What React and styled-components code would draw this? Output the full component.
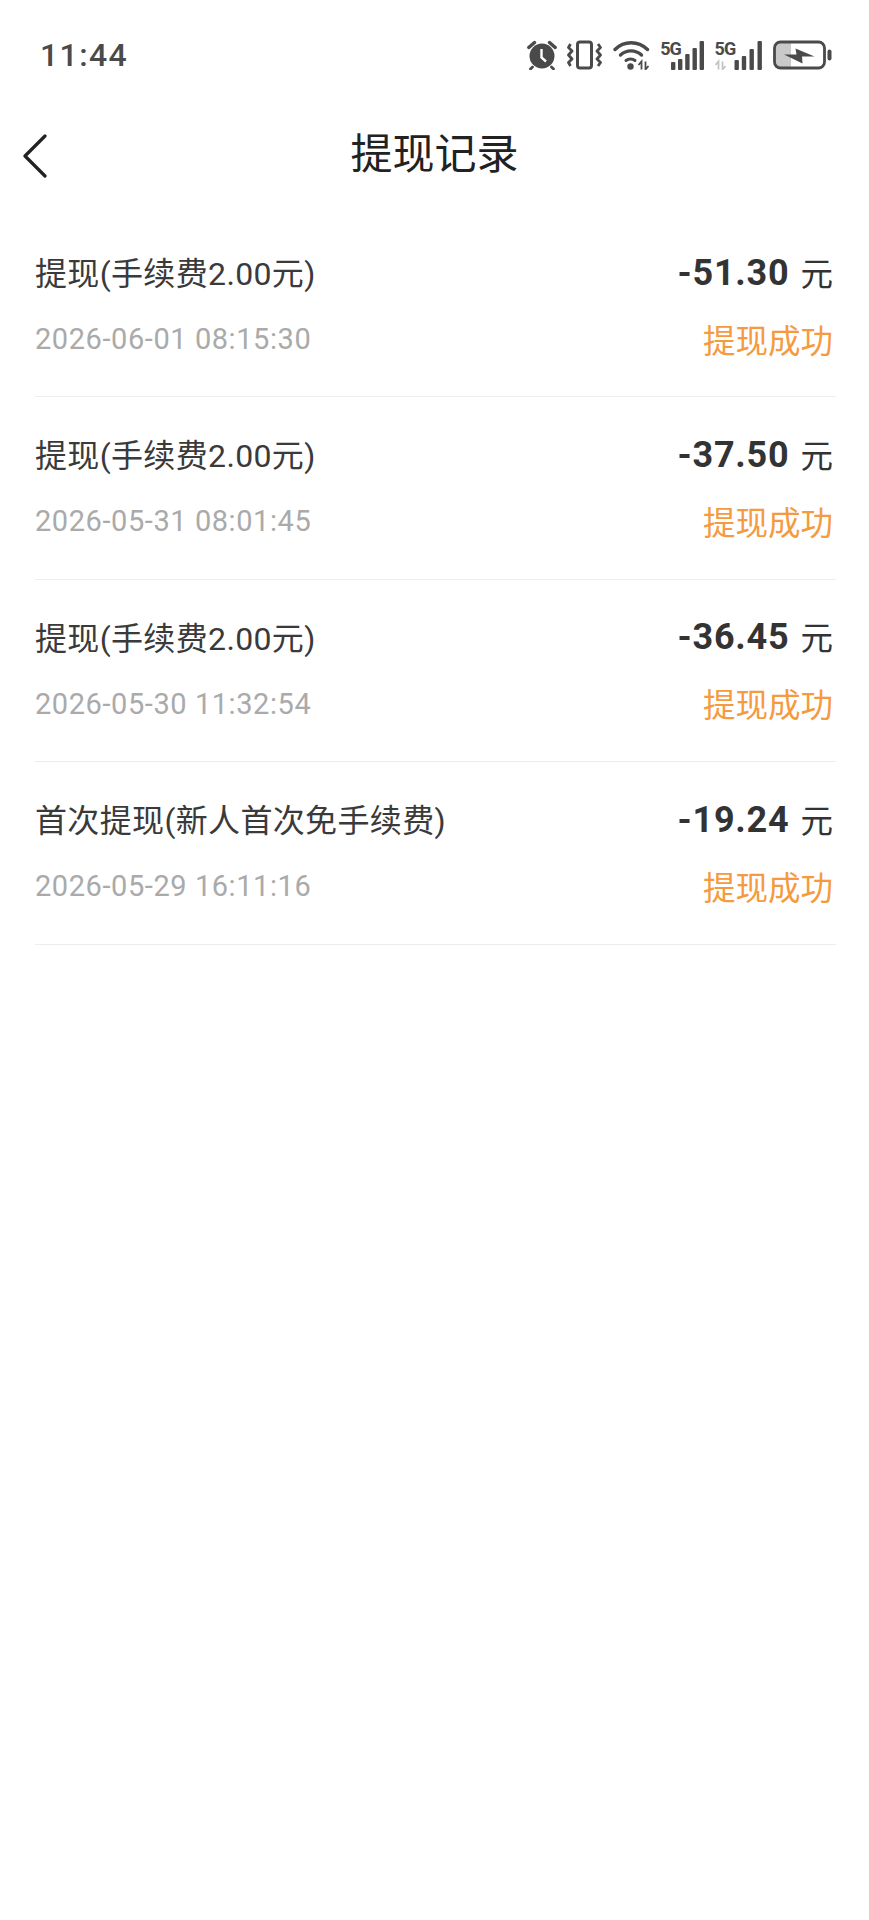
import React from "react";
import styled, { createGlobalStyle } from "styled-components";

const cjk = `Roboto, "Noto Sans CJK SC", sans-serif`;

const Global = createGlobalStyle`
  html, body { margin: 0; padding: 0; background: #fff; }
  #root { width: 869px; min-height: 1920px; background: #fff; }
`;

const Page = styled.div`
  width: 869px;
  min-height: 1920px;
  background: #fff;
  font-family: ${cjk};
`;

const StatusBar = styled.div`
  height: 110px;
  box-sizing: border-box;
  padding: 0 37px 0 40px;
  display: flex;
  align-items: center;
  justify-content: space-between;
`;

const Time = styled.span`
  font-family: Roboto, sans-serif;
  font-size: 32px;
  font-weight: 500;
  letter-spacing: 1.4px;
  color: #4a4a4a;
`;

const StatusIcons = styled.div`
  display: flex;
  align-items: center;
  gap: 10.4px;
  svg { display: block; }
`;

const SignalBox = styled.div`
  position: relative;
  width: ${(p) => p.$width}px;
  height: 30px;
`;

const NetLabel = styled.span`
  position: absolute;
  left: 0;
  top: 0;
  font-family: Roboto, sans-serif;
  font-size: 18px;
  font-weight: 700;
  line-height: 18px;
  letter-spacing: -1px;
  color: #4a4a4a;
`;

const NavBar = styled.div`
  height: 90px;
  display: flex;
  align-items: center;
  justify-content: center;
  position: relative;
`;

const BackButton = styled.div`
  position: absolute;
  left: 22px;
  top: 24px;
  width: 26px;
  height: 44px;
  svg { display: block; }
`;

const Title = styled.h1`
  margin: 0;
  font-size: 42px;
  font-weight: 400;
  color: #222;
  line-height: 1;
`;

const List = styled.div`
  padding: 15px 33px 0 35px;
`;

const Row = styled.div`
  height: 182.4px;
  box-sizing: border-box;
  border-bottom: 1.5px solid #ededed;
  padding-top: 35px;
`;

const Line = styled.div`
  display: flex;
  justify-content: space-between;
  align-items: center;
  height: 44px;
  & + & { margin-top: 23px; }
`;

const Name = styled.span`
  font-size: 32px;
  letter-spacing: 0.35px;
  color: #3a3a3a;
  margin-top: -2px;
`;

const Amount = styled.span`
  display: flex;
  align-items: center;
  gap: 11px;
  padding-right: 3px;
  color: #333;
`;

const Value = styled.span`
  font-size: 36px;
  font-weight: 700;
  letter-spacing: 0.8px;
  margin-top: 1px;
`;

const Unit = styled.span`
  font-size: 32.5px;
  margin-top: -2px;
`;

const Date = styled.span`
  font-size: 29px;
  letter-spacing: 0.57px;
  color: #aaaaaa;
`;

const Status = styled.span`
  font-size: 32.5px;
  color: #f59a3e;
  padding-right: 3px;
  margin-top: -2px;
`;

const Alarm = () => (
  <svg width="30" height="30" viewBox="0 0 30 30" fill="none">
    <circle cx="15" cy="16" r="12.500" fill="#4a4a4a" />
    <path d="M14.500 9v8.500l4.500 4" stroke="#fff" strokeWidth="2.400" />
    <path d="M1.800 7.500L7.500 2.500M28.200 7.500L22.500 2.500" stroke="#4a4a4a" strokeWidth="3.400" strokeLinecap="round" />
    <path d="M5.500 27l-2 2M24.500 27l2 2" stroke="#4a4a4a" strokeWidth="2.800" strokeLinecap="round" />
  </svg>
);

const Vibrate = () => (
  <svg width="35" height="30" viewBox="0 0 35 30" fill="none" stroke="#4a4a4a">
    <rect x="10.500" y="2" width="14" height="26" rx="2.500" strokeWidth="3" />
    <path d="M3.500 4L1.500 7.500 5 11 1.500 15 5 19 1.500 22.500 3.500 26" strokeWidth="2.800" strokeLinejoin="round" />
    <path d="M31 4l2.500 3.500L30 11l3.500 4L30 19l3.500 3.500L31 26" strokeWidth="2.800" strokeLinejoin="round" />
  </svg>
);

const Wifi = () => (
  <svg width="37" height="30" viewBox="0 0 37 30" fill="none">
    <path d="M2 9.500C11 0.500 25 0.500 34.500 9.500" stroke="#4a4a4a" strokeWidth="3.400" strokeLinecap="round" />
    <path d="M7.500 15C13.500 9.500 22.500 9.500 28.500 15" stroke="#4a4a4a" strokeWidth="3.400" strokeLinecap="round" />
    <path d="M13 20.500C15.500 18.500 19.500 18.500 22 20.500" stroke="#4a4a4a" strokeWidth="3" strokeLinecap="round" />
    <circle cx="17.500" cy="26.500" r="3.200" fill="#4a4a4a" />
    <path d="M28.500 29.500v-8l-3 3.500M32.500 21.500v8l3-3.500" stroke="#4a4a4a" strokeWidth="1.800" />
  </svg>
);

const Signal = ({ width, bars, dim }) => (
  <SignalBox $width={width}>
    <svg width={width} height="30" viewBox={`0 0 ${width} 30`} fill="none">
      {dim && <path d="M3.500 29.500v-8l-3 3.500M7.500 21.500v8l3-3.500" stroke="#c4c4c4" strokeWidth="1.800" />}
      {bars.map(([bx, h]) => (
        <rect key={bx} x={bx} y={30 - h} width="4.400" height={h} rx="1" fill="#4a4a4a" />
      ))}
    </svg>
    <NetLabel>5G</NetLabel>
  </SignalBox>
);

const Battery = () => (
  <svg width="59" height="30" viewBox="0 0 59 30" fill="none">
    <rect x="2" y="3" width="16" height="25" fill="#c9c9c9" />
    <rect x="1.500" y="2" width="50" height="26" rx="6" stroke="#4a4a4a" strokeWidth="2.800" />
    <rect x="54.500" y="9.500" width="4" height="11" rx="2" fill="#4a4a4a" />
    <path d="M11 14.500H23.500L22.500 8.500L41.500 16.500H29L29.500 23.500Z" fill="#4a4a4a" />
  </svg>
);

const records = [
  { name: "提现(手续费2.00元)", value: "-51.30", date: "2026-06-01 08:15:30" },
  { name: "提现(手续费2.00元)", value: "-37.50", date: "2026-05-31 08:01:45" },
  { name: "提现(手续费2.00元)", value: "-36.45", date: "2026-05-30 11:32:54" },
  { name: "首次提现(新人首次免手续费)", value: "-19.24", date: "2026-05-29 16:11:16" },
];

const barsOne = [[11, 8], [18, 11], [25.200, 16], [32.500, 22], [39.600, 29]];
const barsTwo = [[19.500, 10], [26.800, 14], [34.500, 21], [42.500, 29]];

export default function App() {
  return (
    <Page>
      <Global />
      <StatusBar>
        <Time>11:44</Time>
        <StatusIcons>
          <Alarm />
          <Vibrate />
          <Wifi />
          <Signal width={44} bars={barsOne} />
          <Signal width={48} bars={barsTwo} dim />
          <Battery />
        </StatusIcons>
      </StatusBar>
      <NavBar>
        <BackButton>
          <svg width="26" height="44" viewBox="0 0 26 44" fill="none">
            <path d="M23 2L3 22l20 20" stroke="#222" strokeWidth="3.200" strokeLinecap="round" strokeLinejoin="round" />
          </svg>
        </BackButton>
        <Title>提现记录</Title>
      </NavBar>
      <List>
        {records.map((r) => (
          <Row key={r.date}>
            <Line>
              <Name>{r.name}</Name>
              <Amount>
                <Value>{r.value}</Value>
                <Unit>元</Unit>
              </Amount>
            </Line>
            <Line>
              <Date>{r.date}</Date>
              <Status>提现成功</Status>
            </Line>
          </Row>
        ))}
      </List>
    </Page>
  );
}
